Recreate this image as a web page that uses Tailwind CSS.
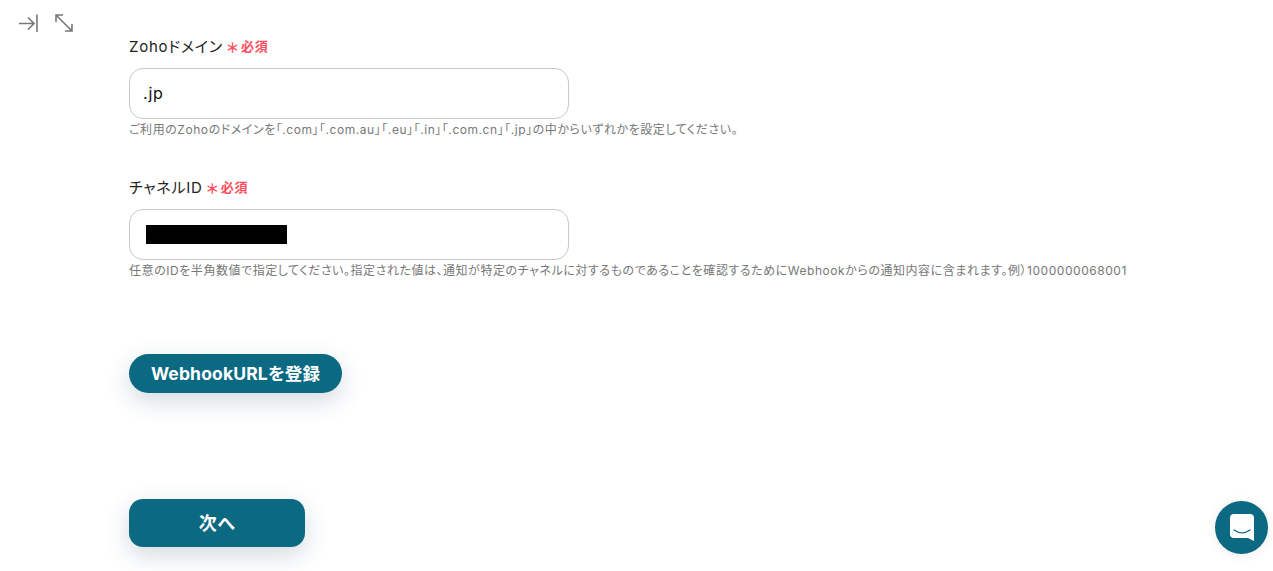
<!DOCTYPE html>
<html lang="ja"><head><meta charset="utf-8">
<script src="https://cdn.jsdelivr.net/npm/@tailwindcss/browser@4"></script>
</head>
<body class="bg-white overflow-hidden font-['Inter','Noto_Sans_CJK_JP',sans-serif] [font-feature-settings:'palt']">
<div class="relative w-[1273px] h-[571px] overflow-hidden">
  <div class="absolute left-[18px] top-[13px] flex gap-[16px] text-[#777]">
    <svg class="w-[20px] h-[20px]" viewBox="0 0 20 20" fill="none" stroke="currentColor" stroke-width="1.6"><path d="M1 10.500H16M10 4.500l6 6-6 6M19 1.500v17.500"/></svg>
    <svg class="w-[20px] h-[20px]" viewBox="0 0 20 20" fill="none" stroke="currentColor" stroke-width="1.600"><path d="M2 2l16 16M2 9V2h7M18 11v7h-7"/></svg>
  </div>
  <div class="pl-[129px] pt-[37px]">
    <div class="flex items-center h-[20px] text-[15px] leading-[20px] tracking-[0.05em] text-[#222]">
      <span>Zohoドメイン</span><span class="ml-[4px] text-[#ff4d5e] text-[14px] font-bold leading-[20px] translate-y-[1px]">＊</span><span class="ml-[2px] text-[#ff4d5e] text-[13px] font-semibold -translate-y-[1px]">必須</span>
    </div>
    <div class="mt-[11px] w-[440px] h-[51px] rounded-[14px] border border-[#c8c8c8] flex items-center pl-[13px] pb-[2px] text-[16px] tracking-[0.05em] text-[#111]">.jp</div>
    <p class="mt-[3px] h-[16px] text-[12px] leading-[16px] tracking-[0.55px] text-[#777]">ご利用のZohoのドメインを「.com」「.com.au」「.eu」「.in」「.com.cn」「.jp」の中からいずれかを設定してください。</p>
    <div class="mt-[40px] flex items-center h-[20px] text-[15px] leading-[20px] tracking-[0.05em] text-[#222]">
      <span>チャネルID</span><span class="ml-[4px] text-[#ff4d5e] text-[14px] font-bold leading-[20px] translate-y-[1px]">＊</span><span class="ml-[2px] text-[#ff4d5e] text-[13px] font-semibold -translate-y-[1px]">必須</span>
    </div>
    <div class="mt-[11px] w-[440px] h-[51px] rounded-[14px] border border-[#c8c8c8] flex items-center pl-[16px]"><div class="w-[141px] h-[19px] bg-black"></div></div>
    <p class="mt-[3px] h-[16px] text-[12px] leading-[16px] tracking-[0.55px] text-[#777] whitespace-nowrap">任意のIDを半角数値で指定してください。指定された値は、通知が特定のチャネルに対するものであることを確認するためにWebhookからの通知内容に含まれます。例）1000000068001</p>
    <button class="mt-[75px] block w-[213px] h-[39px] rounded-full bg-[#0b6982] text-white text-[17.5px] tracking-[0.15px] font-bold pt-[1px] shadow-[0_8px_24px_rgba(30,70,100,0.2)]">WebhookURLを登録</button>
    <button class="mt-[106px] block w-[176px] h-[48px] rounded-[14px] bg-[#0b6982] text-white text-[18px] tracking-[0.5px] font-bold shadow-[0_8px_24px_rgba(30,70,100,0.2)]">次へ</button>
  </div>
  <div class="absolute left-[1215px] top-[501px] w-[53px] h-[53px] rounded-full bg-[#0b6982] flex items-center justify-center shadow-[0_1px_12px_rgba(0,0,0,0.08)]">
    <svg class="w-[24px] h-[27px]" viewBox="0 0 24 27"><path fill="#fff" d="M4 0h16a4 4 0 0 1 4 4v23l-6-3H4a4 4 0 0 1-4-4V4a4 4 0 0 1 4-4z"/><path d="M4 16c5 3.500 11 3.500 16 0" fill="none" stroke="#0b6982" stroke-width="1.300" stroke-linecap="round"/></svg>
  </div>
</div>
</body></html>
